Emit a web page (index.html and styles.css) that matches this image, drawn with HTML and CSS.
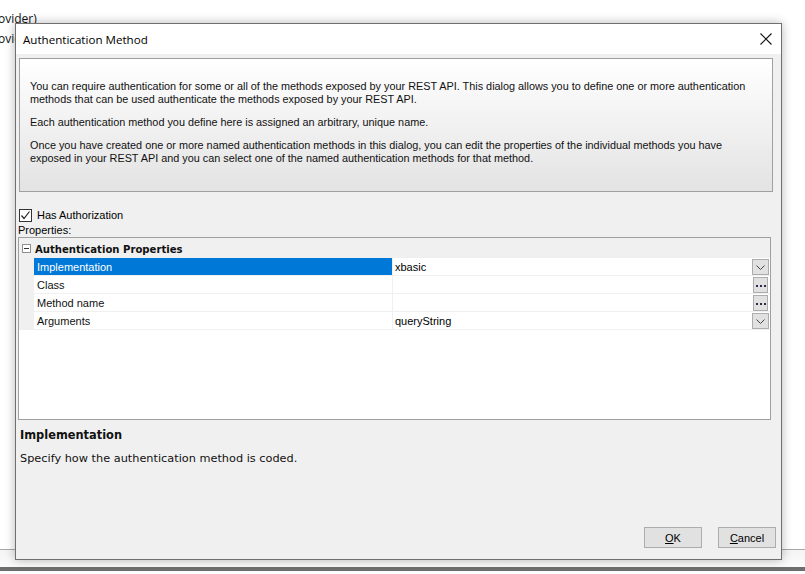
FILE: index.html
```html
<!DOCTYPE html>
<html lang="en">
<head>
<meta charset="utf-8">
<title>Authentication Method</title>
<link rel="stylesheet" href="styles.css">
</head>
<body>
<div class="backdrop">
  <div class="bg-lines">
    <div class="bg-line">ovider)</div>
    <div class="bg-line">ovid</div>
  </div>
  <div class="bg-spacer"></div>
  <div class="bg-rule"></div>
  <div class="bg-gap"></div>
  <div class="bg-bar"></div>
</div>

<div class="dialog">
  <div class="titlebar">
    <span class="title">Authentication Method</span>
    <svg class="close" width="12" height="12" viewBox="0 0 12 12"><path d="M0.5 0.5 L11.5 11.5 M11.5 0.5 L0.5 11.5" stroke="#111" stroke-width="1.1" fill="none"/></svg>
  </div>

  <div class="dlg-body">
    <div class="info">
      <p>You can require authentication for some or all of the methods exposed by your REST API. This dialog allows you to define one or more authentication methods that can be used authenticate the methods exposed by your REST API.</p>
      <p>Each authentication method you define here is assigned an arbitrary, unique name.</p>
      <p>Once you have created one or more named authentication methods in this dialog, you can edit the properties of the individual methods you have exposed in your REST API and you can select one of the named authentication methods for that method.</p>
    </div>

    <label class="check-row">
      <span class="checkbox"><svg width="11" height="11" viewBox="0 0 11 11"><path d="M1.5 5.5 L4 8.5 L9.5 1.5" stroke="#222" stroke-width="1.2" fill="none"/></svg></span>
      <span>Has Authorization</span>
    </label>
    <div class="props-label">Properties:</div>

    <div class="grid">
      <div class="cat-row">
        <span class="margin"><span class="collapse"><span class="minus"></span></span></span>
        <span class="cat-name">Authentication Properties</span>
      </div>
      <div class="row">
        <span class="margin"></span>
        <span class="name selected">Implementation</span>
        <span class="value">xbasic</span>
        <span class="btn drop"><svg width="9" height="5" viewBox="0 0 9 5"><path d="M0.5 0.5 L4.5 4.5 L8.5 0.5" stroke="#444" stroke-width="1" fill="none"/></svg></span>
      </div>
      <div class="row">
        <span class="margin"></span>
        <span class="name">Class</span>
        <span class="value"></span>
        <span class="btn dots"><i></i><i></i><i></i></span>
      </div>
      <div class="row">
        <span class="margin"></span>
        <span class="name">Method name</span>
        <span class="value"></span>
        <span class="btn dots"><i></i><i></i><i></i></span>
      </div>
      <div class="row">
        <span class="margin"></span>
        <span class="name">Arguments</span>
        <span class="value">queryString</span>
        <span class="btn drop"><svg width="9" height="5" viewBox="0 0 9 5"><path d="M0.5 0.5 L4.5 4.5 L8.5 0.5" stroke="#444" stroke-width="1" fill="none"/></svg></span>
      </div>
    </div>

    <div class="desc">
      <div class="desc-title">Implementation</div>
      <div class="desc-text">Specify how the authentication method is coded.</div>
    </div>

    <div class="buttons">
      <button class="push"><u>O</u>K</button>
      <button class="push"><u>C</u>ancel</button>
    </div>
  </div>
</div>
</body>
</html>
```

FILE: styles.css
```css
* { box-sizing: border-box; }

html, body {
  margin: 0;
  height: 100%;
}

body {
  background: #ffffff;
  font-family: "Liberation Sans", Arial, sans-serif;
  font-size: 12px;
  color: #000;
  overflow: hidden;
}

/* application window behind the dialog */
.backdrop {
  height: 574px;
  display: flex;
  flex-direction: column;
}

.bg-lines {
  padding-top: 9px;
  margin-left: -2px;
}

.bg-line {
  font-family: "Open Sans", sans-serif;
  font-size: 12px;
  line-height: 20px;
  color: #111;
}

.bg-spacer { flex: 1; }

.bg-rule {
  height: 1px;
  background: #a8a8a8;
}

.bg-gap {
  height: 17px;
  background: linear-gradient(#f4f4f4, #fbfbfb);
}

.bg-bar {
  height: 4px;
  background: #6e6e6e;
  margin-bottom: 3px;
}

/* dialog window */
.dialog {
  position: absolute;
  left: 15px;
  top: 23px;
  width: 767px;
  height: 537px;
  border: 1px solid #6f6f6f;
  background: #f0f0f0;
  box-shadow: 0 0 10px rgba(0, 0, 0, 0.28);
  display: flex;
  flex-direction: column;
}

.titlebar {
  height: 30px;
  background: #ffffff;
  display: flex;
  align-items: center;
  justify-content: space-between;
  padding: 0 9px 0 7px;
}

.title {
  font-family: "Open Sans", sans-serif;
  font-size: 11.6px;
  color: #000;
}

.close { display: block; }

.dlg-body {
  flex: 1;
  display: flex;
  flex-direction: column;
  padding: 4px 0 0 0;
}

.info {
  margin-left: 3px;
  width: 754px;
  height: 134px;
  border: 1px solid #a0a0a0;
  background: linear-gradient(#ffffff, #e3e3e3);
  padding: 21px 10px 0 10px;
  font-family: "Liberation Sans", Arial, sans-serif;
  font-size: 10.85px;
  line-height: 13px;
  color: #111;
}

.info p {
  margin: 0 0 10px 0;
}

.check-row {
  display: flex;
  align-items: center;
  gap: 5px;
  margin: 16px 0 0 3px;
  font-family: "Liberation Sans", Arial, sans-serif;
  font-size: 11px;
  height: 14px;
}

.checkbox {
  width: 13px;
  height: 13px;
  border: 1px solid #333;
  background: #fff;
  display: flex;
  align-items: center;
  justify-content: center;
}

.checkbox svg { display: block; }

.props-label {
  margin: 2px 0 0 2px;
  font-family: "Liberation Sans", Arial, sans-serif;
  font-size: 11px;
  line-height: 13px;
}

/* property grid */
.grid {
  margin-left: 2px;
  width: 753px;
  height: 183px;
  border: 1px solid #a0a0a0;
  background: #ffffff;
  font-family: "Liberation Sans", Arial, sans-serif;
  font-size: 11px;
}

.cat-row {
  height: 20px;
  background: #f0f0f0;
  display: flex;
  align-items: center;
}

.margin {
  width: 15px;
  flex: none;
  align-self: stretch;
  background: #f0f0f0;
  display: flex;
  align-items: center;
  justify-content: center;
}

.collapse {
  width: 9px;
  height: 9px;
  border: 1px solid #909090;
  background: #fff;
  display: flex;
  align-items: center;
  justify-content: center;
}

.minus {
  width: 5px;
  height: 1px;
  background: #333;
}

.cat-name {
  font-family: "DejaVu Sans", sans-serif;
  font-weight: bold;
  font-size: 10.1px;
  padding: 2px 0 0 1px;
  color: #111;
}

.row {
  height: 18px;
  display: flex;
  align-items: stretch;
  border-bottom: 1px solid #f0f0f0;
}

.name {
  width: 359px;
  flex: none;
  padding-left: 3px;
  display: flex;
  align-items: center;
  border-right: 1px solid #f0f0f0;
  color: #111;
}

.name.selected {
  background: #0078d7;
  color: #fff;
}

.value {
  flex: 1;
  padding-left: 2px;
  display: flex;
  align-items: center;
  color: #000;
}

.btn {
  width: 17px;
  margin: 1px 1px 0 0;
  height: 16px;
  background: #e1e1e1;
  border: 1px solid #adadad;
  display: flex;
  align-items: center;
  justify-content: center;
}

.btn.dots {
  width: 15px;
  margin-right: 2px;
  gap: 2px;
  padding-top: 1px;
}

.btn.dots i {
  width: 2px;
  height: 2px;
  background: #2a2a4a;
}

/* description pane */
.desc {
  margin: 9px 0 0 4px;
  font-family: "DejaVu Sans", sans-serif;
  color: #111;
}

.desc-title {
  font-weight: bold;
  font-size: 11.4px;
  line-height: 13px;
}

.desc-text {
  margin-top: 10px;
  font-size: 11.3px;
  line-height: 13px;
}

.buttons {
  margin-top: auto;
  margin-bottom: 11px;
  display: flex;
  justify-content: flex-end;
  gap: 16px;
  padding-right: 5px;
}

.push {
  width: 58px;
  height: 21px;
  background: #e1e1e1;
  border: 1px solid #adadad;
  font-family: "Liberation Sans", Arial, sans-serif;
  font-size: 11px;
  color: #000;
  padding: 0;
}
```
